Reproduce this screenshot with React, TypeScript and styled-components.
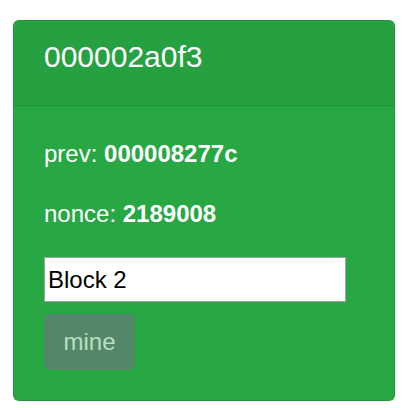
import React from "react";
import styled, { createGlobalStyle } from "styled-components";

const Global = createGlobalStyle`
  html, body { margin: 0; padding: 0; background: #fff; }
  body { font-family: "Liberation Sans", Arial, sans-serif; }
  * { box-sizing: border-box; }
`;

const Page = styled.div`
  padding: 20px 11px 9px 13px;
`;

const Card = styled.div`
  width: 382px;
  background: #28a745;
  border: 1px solid rgba(0, 0, 0, 0.125);
  border-radius: 6px;
  color: #fff;
  overflow: hidden;
`;

const CardHeader = styled.div`
  padding: 18px 30px;
  background: rgba(0, 0, 0, 0.03);
  border-bottom: 1px solid rgba(0, 0, 0, 0.125);
`;

const Title = styled.h5`
  margin: 0 0 12px;
  font-size: 30px;
  font-weight: 400;
  line-height: 1.2;
`;

const CardBody = styled.div`
  padding: 30px;
  display: flex;
  flex-direction: column;
  align-items: flex-start;
`;

const Field = styled.p`
  margin: 0 0 24px;
  font-size: 24px;
  line-height: 36px;
`;

const Value = styled.strong`
  font-weight: 700;
`;

const Input = styled.input`
  margin-top: 1px;
  width: 302px;
  height: 45px;
  padding: 0 3px;
  border: 1px solid #a0a0a0;
  background: #fff;
  color: #000;
  font-family: "Liberation Sans", Arial, sans-serif;
  font-size: 24px;
  outline: none;
`;

const MineButton = styled.button`
  margin-top: 12px;
  width: 91px;
  padding: 9px 0;
  border: 1px solid #6c757d;
  border-radius: 6px;
  background: #6c757d;
  color: #fff;
  opacity: 0.65;
  font-family: "Liberation Sans", Arial, sans-serif;
  font-size: 24px;
  line-height: 36px;
  text-align: center;
  cursor: default;
`;

export default function App() {
  return (
    <>
      <Global />
      <Page>
        <Card>
          <CardHeader>
            <Title>000002a0f3</Title>
          </CardHeader>
          <CardBody>
            <Field>
              prev: <Value>000008277c</Value>
            </Field>
            <Field>
              nonce: <Value>2189008</Value>
            </Field>
            <Input defaultValue="Block 2" />
            <MineButton disabled>mine</MineButton>
          </CardBody>
        </Card>
      </Page>
    </>
  );
}
